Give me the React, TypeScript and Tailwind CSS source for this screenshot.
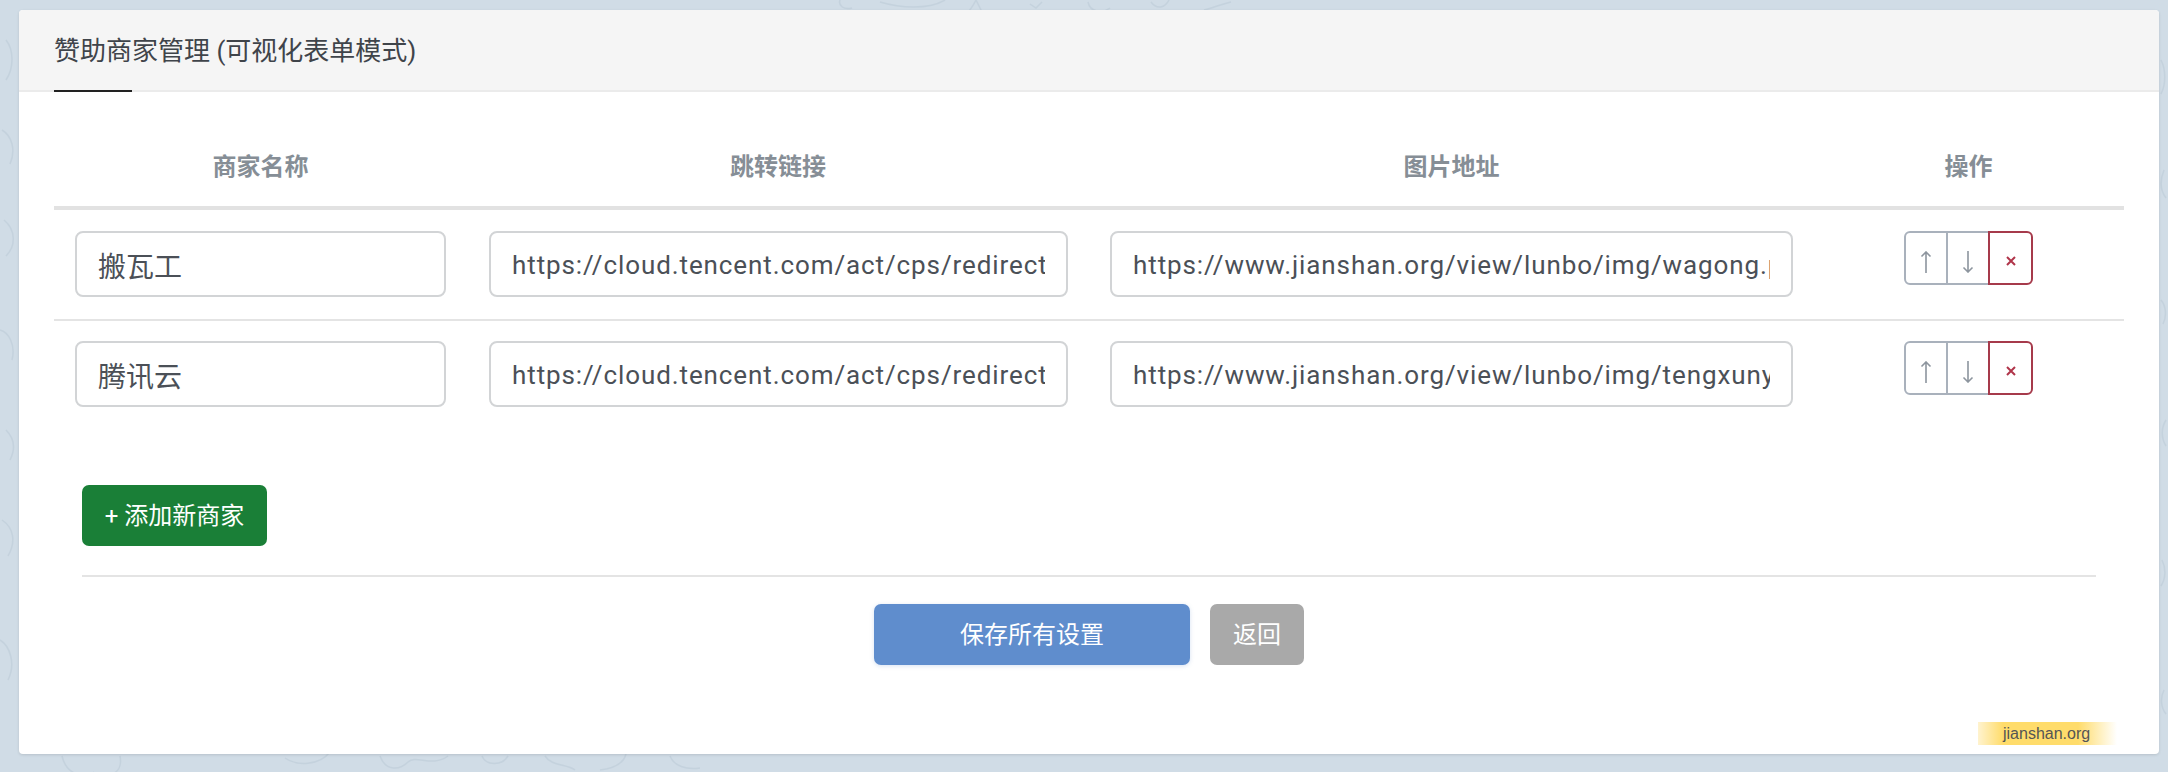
import React from "react";

const FONT = "font-['Roboto','Noto_Sans_CJK_SC',sans-serif]";

const rows = [
  {
    name: "搬瓦工",
    link: "https://cloud.tencent.com/act/cps/redirect?redirect=1079",
    image: "https://www.jianshan.org/view/lunbo/img/wagong.png",
  },
  {
    name: "腾讯云",
    link: "https://cloud.tencent.com/act/cps/redirect?redirect=1079",
    image: "https://www.jianshan.org/view/lunbo/img/tengxunyun.png",
  },
];

// faint doodles of the page wallpaper, only the rim shows round the card
const Wallpaper = () => (
  <svg className="absolute inset-0" width="2168" height="772" fill="none" stroke="#bac9d6" strokeWidth="1.5" opacity="0.5">
    <path d="M62 756c4 18 22 24 32 16M120 756c2 10-2 16-8 18M285 758c12 8 34 8 45-6M380 756c6 16 20 14 28 6s24 6 40-6M482 756c4 10 20 10 26 0M545 756c6 10 22 8 30 14M600 770c16-2 24-8 26-16M670 756c4 10 16 14 30 12" />
    <path d="M840 0c-2 6 4 10 12 8M880 2c20 6 48 8 65-2M968 12c4-4 6-8 8-12 2 4 4 8 6 12M1030 4l6 4 6-6M1088 2c2 10 14 12 22 6M1151 2c6 8 14 6 18-2M1204 10c8-2 18-6 27-8" />
    <path d="M6 40c8 10 8 28 0 40M2 130c10 6 14 20 8 34M4 220c12 10 12 26 2 36M0 330c8 2 16 14 12 30M6 430c8 8 10 18 4 30M2 520c12 8 14 22 6 36M0 640c10 6 16 24 8 40" />
    <path d="M2161 60c5 10 5 24 0 34M2164 170c-4 10-4 20 2 28M2161 300c5 6 6 16 2 24M2166 420c-5 8-5 18 0 26M2162 560c4 8 4 18-1 26M2164 690c-4 8-3 18 2 24" />
  </svg>
);

const ArrowIcon = ({ down = false }: { down?: boolean }) => (
  <svg width="12" height="22" viewBox="0 0 12 22" fill="none" stroke="#8d959e" strokeWidth="1.6" className="mt-[7px]">
    {down ? <path d="M6 0v21M1.5 16.5 6 21l4.5-4.5" /> : <path d="M6 22V1M1.5 5.5 6 1l4.5 4.5" />}
  </svg>
);

const RowActions = () => (
  <div className="inline-flex h-[54px] align-top">
    <button className="flex h-full w-[44px] items-center justify-center rounded-l-[6px] border-2 border-[#a9b1bc]">
      <ArrowIcon />
    </button>
    <button className="-ml-[2px] flex h-full w-[44px] items-center justify-center border-2 border-[#a9b1bc]">
      <ArrowIcon down />
    </button>
    <button className="relative -ml-[2px] flex h-full w-[45px] items-center justify-center rounded-r-[6px] border-2 border-[#a63a4b]">
      <svg width="10" height="10" viewBox="0 0 10 10" stroke="#b0354a" strokeWidth="2" className="mt-[6px]">
        <path d="M1 1l8 8M9 1l-8 8" />
      </svg>
    </button>
  </div>
);

const Field = ({ value, width, text }: { value: string; width: string; text: string }) => (
  <input
    readOnly
    value={value}
    className={`${width} ${text} block h-[66px] rounded-[8px] border-2 border-[#d2d4d6] bg-white px-[21px] pt-[1px] text-[#4b5057] outline-none ${FONT}`}
  />
);

export default function App() {
  return (
    <div className={`relative h-[772px] w-[2168px] overflow-hidden bg-[#d0dce6] pl-[19px] pr-[9px] pt-[10px] ${FONT}`}>
      <Wallpaper />
      <div className="relative flex h-[744px] flex-col overflow-hidden rounded-[4px] bg-white shadow-[0_1px_3px_rgba(0,0,0,0.12)]">
        <div className="bg-[#f5f5f5]">
          <h1 className="pl-[35px] pt-[25px] text-[26px] font-normal leading-[32px] text-[#3f444a]">
            赞助商家管理 (可视化表单模式)
          </h1>
          <div className="mt-[23px] h-[2px] bg-[#ebebeb]">
            <div className="ml-[35px] h-full w-[78px] bg-[#222222]" />
          </div>
        </div>

        <div className="px-[35px]">
          <table className="w-full table-fixed border-separate border-spacing-0">
            <thead>
              <tr className="text-center text-[24px] font-bold leading-[28px] text-[#868e96]">
                <th className="w-[413px] border-b-4 border-[#e2e2e2] pb-[25px] pt-[61px]">商家名称</th>
                <th className="w-[622px] border-b-4 border-[#e2e2e2] pb-[25px] pt-[61px]">跳转链接</th>
                <th className="w-[725px] border-b-4 border-[#e2e2e2] pb-[25px] pt-[61px]">图片地址</th>
                <th className="border-b-4 border-[#e2e2e2] pb-[25px] pr-[1px] pt-[61px]">操作</th>
              </tr>
            </thead>
            <tbody>
              {rows.map((row, i) => (
                <tr key={row.name}>
                  <td className={i === 0 ? "border-b-2 border-[#e4e4e4] pb-[22px] pl-[21px] pt-[21px] align-top" : "pl-[21px] pt-[20px] align-top"}>
                    <Field value={row.name} width="w-[371px]" text="text-[28px]" />
                  </td>
                  <td className={i === 0 ? "border-b-2 border-[#e4e4e4] pb-[22px] pl-[22px] pt-[21px] align-top" : "pl-[22px] pt-[20px] align-top"}>
                    <Field value={row.link} width="w-[579px]" text="text-[26px] tracking-[0.9px]" />
                  </td>
                  <td className={i === 0 ? "border-b-2 border-[#e4e4e4] pb-[22px] pl-[21px] pt-[21px] align-top" : "pl-[21px] pt-[20px] align-top"}>
                    <Field value={row.image} width="w-[683px]" text="text-[26px] tracking-[0.9px]" />
                  </td>
                  <td className={i === 0 ? "border-b-2 border-[#e4e4e4] pb-[22px] pr-[1px] pt-[21px] text-center align-top" : "pr-[1px] pt-[20px] text-center align-top"}>
                    <RowActions />
                  </td>
                </tr>
              ))}
            </tbody>
          </table>

          <div className="mx-[28px] mt-[78px]">
            <button className="h-[61px] w-[185px] rounded-[7px] bg-[#1a7f37] text-[24px] text-white">+ 添加新商家</button>
            <div className="mt-[29px] h-[2px] bg-[#e4e4e4]" />
          </div>

          <div className="mt-[27px] flex justify-center gap-[20px]">
            <button className="h-[61px] w-[316px] rounded-[7px] bg-[#5f8dcd] text-[24px] text-white shadow-[0_1px_4px_rgba(95,141,205,0.25)]">
              保存所有设置
            </button>
            <button className="h-[61px] w-[94px] rounded-[7px] bg-[#a9a9a9] text-[24px] text-white">返回</button>
          </div>
        </div>

        <div className="absolute left-[1959px] top-[712px] flex h-[23px] w-[139px] items-center bg-[linear-gradient(90deg,#fff3cf_0%,#ffdc6b_18%,#ffdc6b_72%,#ffffff00_100%)] pl-[25px] font-['Liberation_Sans',sans-serif] text-[16px] text-[#555555]">
          jianshan.org
        </div>
      </div>
    </div>
  );
}
